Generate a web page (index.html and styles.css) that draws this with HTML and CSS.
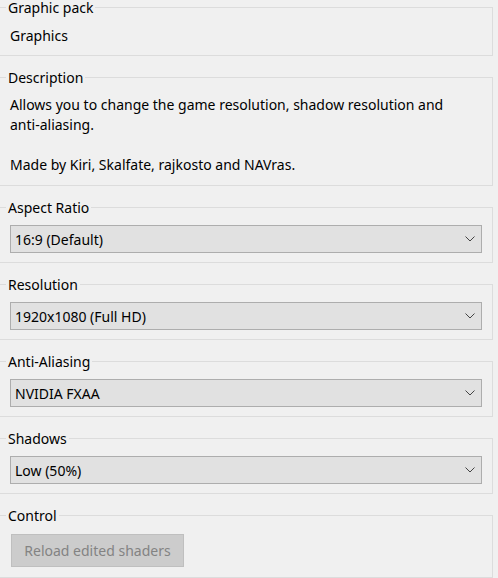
FILE: index.html
```html
<!DOCTYPE html>
<html>
<head>
<meta charset="utf-8">
<link rel="stylesheet" href="styles.css">
</head>
<body>
<div class="panel">
  <fieldset class="group first">
    <legend>Graphic pack</legend>
    <div class="value">Graphics</div>
  </fieldset>
  <fieldset class="group">
    <legend>Description</legend>
    <div class="desc">
      <p>Allows you to change the game resolution, shadow resolution and <span class="nw">anti-aliasing.</span></p>
      <p>Made by Kiri, Skalfate, rajkosto and NAVras.</p>
    </div>
  </fieldset>
  <fieldset class="group sel">
    <legend>Aspect Ratio</legend>
    <div class="combo"><span>16:9 (Default)</span><svg class="chev" width="10" height="6" viewBox="0 0 10 6"><polyline points="0.5,0.5 5,5 9.5,0.5" fill="none" stroke="#444" stroke-width="1"/></svg></div>
  </fieldset>
  <fieldset class="group sel">
    <legend>Resolution</legend>
    <div class="combo"><span>1920x1080 (Full HD)</span><svg class="chev" width="10" height="6" viewBox="0 0 10 6"><polyline points="0.5,0.5 5,5 9.5,0.5" fill="none" stroke="#444" stroke-width="1"/></svg></div>
  </fieldset>
  <fieldset class="group sel">
    <legend>Anti-Aliasing</legend>
    <div class="combo"><span>NVIDIA FXAA</span><svg class="chev" width="10" height="6" viewBox="0 0 10 6"><polyline points="0.5,0.5 5,5 9.5,0.5" fill="none" stroke="#444" stroke-width="1"/></svg></div>
  </fieldset>
  <fieldset class="group sel">
    <legend>Shadows</legend>
    <div class="combo"><span>Low (50%)</span><svg class="chev" width="10" height="6" viewBox="0 0 10 6"><polyline points="0.5,0.5 5,5 9.5,0.5" fill="none" stroke="#444" stroke-width="1"/></svg></div>
  </fieldset>
  <fieldset class="group ctrl">
    <legend>Control</legend>
    <button class="btn" disabled>Reload edited shaders</button>
  </fieldset>
</div>
</body>
</html>
```
FILE: styles.css
```css
html, body {
  margin: 0;
  padding: 0;
  background: #f0f0f0;
  overflow: hidden;
}
body {
  font-family: "Noto Sans", "Open Sans", sans-serif;
  font-size: 14px;
  color: #000;
}
.panel {
  display: flex;
  flex-direction: column;
  gap: 14px;
  margin-left: -1px;
  width: 494px;
}
.group {
  margin: 0;
  min-width: 0;
  border: 1px solid #dcdcdc;
  padding: 10px 10px 9px 10px;
  box-sizing: border-box;
}
.group legend {
  margin-left: -4px;
  padding: 0 2px;
  line-height: 15px;
  height: 15px;
}
.value {
  line-height: 20px;
  padding-top: 1px;
}
.desc p {
  margin: 0;
  line-height: 20px;
}
.desc p + p {
  margin-top: 20px;
}
.desc {
  padding-bottom: 1px;
}
.nw {
  white-space: nowrap;
}
.combo {
  height: 28px;
  box-sizing: border-box;
  border: 1px solid #adadad;
  background: #e1e1e1;
  display: flex;
  align-items: center;
  justify-content: space-between;
  padding: 0 6px 0 4px;
}
.chev {
  display: block;
}
.ctrl {
  padding-top: 11px;
  padding-bottom: 10px;
}
.btn {
  margin: 0 0 0 1px;
  width: 173px;
  height: 33px;
  box-sizing: border-box;
  border: 1px solid #bfbfbf;
  background: #cccccc;
  color: #838383;
  font-family: inherit;
  font-size: 14px;
  padding: 0;
}
```
